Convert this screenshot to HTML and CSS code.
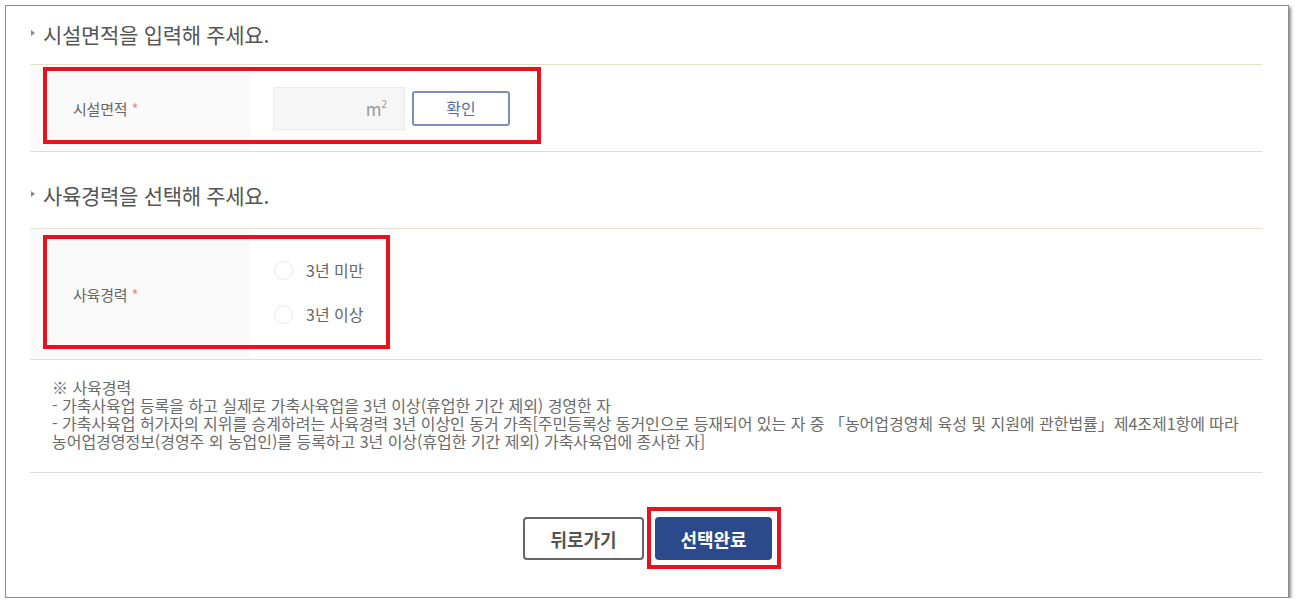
FILE: index.html
```html
<!DOCTYPE html>
<html lang="ko">
<head>
  <meta charset="UTF-8" />
  <meta name="viewport" content="width=1296, initial-scale=1.0" />
  <title>시설면적 / 사육경력 선택</title>
  <link rel="stylesheet" href="styles.css">
</head>
<body>
  <div class="frame">
    <div class="content">

      <h3 class="sec-title">시설면적을 입력해 주세요.</h3>
      <div class="form-row row-area">
        <div class="label-cell">시설면적 <span class="req">*</span></div>
        <div class="value-cell">
          <div class="unit-input"><span>m<sup>2</sup></span></div>
          <button class="btn-check" type="button">확인</button>
        </div>
        <!-- annotation box -->
        <div class="mark mark-area"></div>
      </div>

      <h3 class="sec-title title-2">사육경력을 선택해 주세요.</h3>
      <div class="form-row row-career">
        <div class="label-cell">사육경력 <span class="req">*</span></div>
        <div class="value-cell radios">
          <label class="radio"><i></i>3년 미만</label>
          <label class="radio"><i></i>3년 이상</label>
        </div>
        <div class="mark mark-career"></div>
      </div>

      <div class="note">
        <p>※ 사육경력</p>
        <p>- 가축사육업 등록을 하고 실제로 가축사육업을 3년 이상(휴업한 기간 제외) 경영한 자</p>
        <p>- 가축사육업 허가자의 지위를 승계하려는 사육경력 3년 이상인 동거 가족[주민등록상 동거인으로 등재되어 있는 자 중 「농어업경영체 육성 및 지원에 관한법률」제4조제1항에 따라</p>
        <p>농어업경영정보(경영주 외 농업인)를 등록하고 3년 이상(휴업한 기간 제외) 가축사육업에 종사한 자]</p>
      </div>

      <div class="actions">
        <button class="btn btn-back" type="button">뒤로가기</button>
        <div class="done-wrap">
          <button class="btn btn-done" type="button">선택완료</button>
          <div class="mark mark-done"></div>
        </div>
      </div>

    </div>
  </div>
</body>
</html>
```

FILE: styles.css
```css
html, body {
  margin: 0;
  padding: 0;
  background: #fff;
  font-family: "Noto Sans CJK KR", "Noto Sans", sans-serif;
  color: #555;
}

.frame {
  margin: 5px 0 0 5px;
  width: 1284px;
  height: 593px;
  border: 1px solid #8c8c8c;
  box-shadow: 2px 2px 3px rgba(0, 0, 0, 0.45);
  background: #fff;
  box-sizing: border-box;
}

.content {
  padding: 0 26px 0 24px;
}

/* section titles */
.sec-title {
  margin: 0;
  height: 56px;
  display: flex;
  align-items: center;
  padding-left: 13px;
  position: relative;
  font-size: 21px;
  font-weight: 400;
  letter-spacing: -0.3px;
  color: #555;
  border-bottom: 1px solid #eadfc9;
  padding-bottom: 2px;
  box-sizing: content-box;
}

.sec-title::before {
  content: "";
  position: absolute;
  left: 1px;
  top: 24px;
  border-left: 4px solid #8a8a8a;
  border-top: 3px solid transparent;
  border-bottom: 3px solid transparent;
}

.title-2 {
  height: 66px;
  padding-top: 10px;
  padding-bottom: 0;
}

.title-2::before {
  top: 39px;
}

/* form rows */
.form-row {
  display: flex;
  position: relative;
  border-bottom: 1px solid #dcdcdc;
}

.row-area { height: 86px; }
.row-career { height: 130px; }

.label-cell {
  width: 220px;
  background: #fafafa;
  display: flex;
  align-items: center;
  padding-left: 43px;
  box-sizing: border-box;
  font-size: 15px;
  color: #666;
  letter-spacing: -0.2px;
}

.req {
  color: #ec8b78;
  margin-left: 4px;
}

.value-cell {
  display: flex;
  align-items: center;
  padding-left: 23px;
  gap: 7px;
}

.unit-input {
  width: 132px;
  height: 43px;
  background: #f6f6f6;
  border: 1px solid #ececec;
  box-sizing: border-box;
  display: flex;
  align-items: center;
  justify-content: flex-end;
  padding-right: 17px;
  font-size: 17px;
  color: #999;
}

.unit-input sup {
  font-size: 10px;
  vertical-align: 8px;
  line-height: 0;
}

.btn-check {
  width: 98px;
  height: 35px;
  border: 2px solid #7e8db8;
  border-radius: 3px;
  background: #fff;
  color: #5a6ca4;
  font-family: inherit;
  font-size: 16px;
  font-weight: 400;
}

.radios {
  flex-direction: column;
  align-items: flex-start;
  justify-content: center;
  gap: 21px;
  padding-left: 24px;
  padding-bottom: 4px;
}

.radio {
  display: flex;
  align-items: center;
  gap: 13px;
  font-size: 16px;
  color: #666;
  height: 23px;
}

.radio i {
  width: 17px;
  height: 17px;
  border: 1px solid #e9e9e9;
  border-radius: 50%;
  background: #fff;
}

/* red annotation boxes */
.mark {
  position: absolute;
  border: 4px solid #e8111d;
  box-sizing: border-box;
  pointer-events: none;
}

.mark-area {
  left: 13px;
  top: 2px;
  width: 498px;
  height: 77px;
}

.mark-career {
  left: 13px;
  top: 6px;
  width: 347px;
  height: 114px;
}

.mark-done {
  left: -8px;
  top: -10px;
  width: 134px;
  height: 62px;
}

/* note */
.note {
  height: 113px;
  padding: 18px 0 0 22px;
  box-sizing: border-box;
  border-bottom: 1px solid #dcdcdc;
  font-size: 16px;
  line-height: 18px;
  color: #6a6a6a;
  letter-spacing: -0.03px;
}

.note p {
  margin: 0;
}

/* buttons */
.actions {
  display: flex;
  justify-content: center;
  gap: 11px;
  padding-top: 44px;
  padding-left: 3px;
}

.done-wrap {
  position: relative;
}

.btn {
  height: 43px;
  border-radius: 4px;
  font-family: inherit;
  font-size: 18px;
  font-weight: 700;
  padding: 0;
}

.btn-back {
  width: 121px;
  border: 2px solid #666;
  background: #fff;
  color: #555;
}

.btn-done {
  width: 117px;
  border: none;
  background: #2b4a8b;
  color: #fff;
}
```
